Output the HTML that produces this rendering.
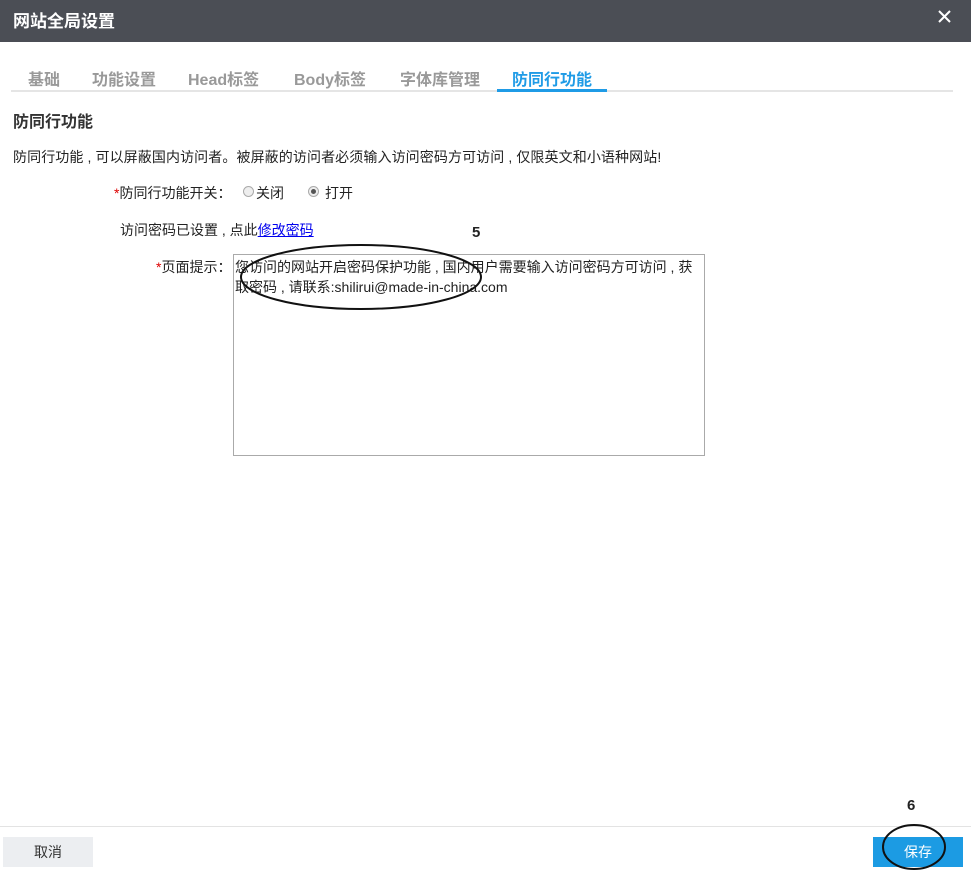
<!DOCTYPE html>
<html><head><meta charset="utf-8"><style>
*{margin:0;padding:0;box-sizing:border-box}
body{width:971px;height:870px;background:#fff;font-family:"Liberation Sans","Noto Sans CJK SC",sans-serif;color:#222;position:relative;overflow:hidden;font-size:14px}
.hd{position:absolute;left:0;top:0;width:971px;height:42px;background:#4b4e55;color:#fff}
.hd .t{position:absolute;left:13px;top:7px;font-size:17px;font-weight:bold}
.tab{position:absolute;top:66px;font-size:16px;font-weight:bold;color:#999}
.line{position:absolute;left:11px;top:90px;width:942px;height:2px;background:#e5e5e5}
.act{position:absolute;left:497px;top:89px;width:110px;height:3px;background:#1f9be6}
.a{position:absolute;white-space:nowrap}
.r{position:absolute;width:11px;height:11px;border:1px solid #aaa;border-radius:50%;background:#eee}
.r.on:after{content:"";position:absolute;left:2px;top:2px;width:5px;height:5px;border-radius:50%;background:#555}
.ta{position:absolute;left:233px;top:254px;width:472px;height:202px;border:1px solid #aaa;padding:2px 1px;font-size:14px;line-height:20px}
.btn{position:absolute;top:837px;width:90px;height:30px;text-align:center;line-height:30px;font-size:14px}
</style></head><body>
<div class="hd"><span class="t">网站全局设置</span>
<svg style="position:absolute;left:938px;top:10px" width="13" height="13"><path d="M1 1L12 12M12 1L1 12" stroke="#fff" stroke-width="2"/></svg></div>
<span class="tab" style="left:28px">基础</span>
<span class="tab" style="left:92px">功能设置</span>
<span class="tab" style="left:188px">Head标签</span>
<span class="tab" style="left:294px">Body标签</span>
<span class="tab" style="left:400px">字体库管理</span>
<span class="tab" style="left:512px;color:#1f9be6">防同行功能</span>
<div class="line"></div><div class="act"></div>
<div class="a" style="left:13px;top:108px;font-size:16px;font-weight:bold;color:#333">防同行功能</div>
<div class="a" style="left:13px;top:147px;letter-spacing:0.1px">防同行功能 , 可以屏蔽国内访问者。被屏蔽的访问者必须输入访问密码方可访问 , 仅限英文和小语种网站!</div>
<div class="a" style="left:114px;top:183px"><span style="color:#d00">*</span>防同行功能开关：</div>
<span class="r" style="left:243px;top:186px"></span><div class="a" style="left:256px;top:183px">关闭</div>
<span class="r on" style="left:308px;top:186px"></span><div class="a" style="left:325px;top:183px">打开</div>
<div class="a" style="left:120px;top:220px">访问密码已设置 , 点此<a style="color:#00e;text-decoration:underline">修改密码</a></div>
<div class="a" style="left:156px;top:257px"><span style="color:#d00">*</span>页面提示：</div>
<div class="ta">您访问的网站开启密码保护功能 , 国内用户需要输入访问密码方可访问 , 获取密码 , 请联系:shilirui@made-in-china.com</div>
<div class="a" style="left:472px;top:224px;font-weight:bold;font-size:15px">5</div>
<div style="position:absolute;left:0;top:826px;width:971px;height:1px;background:#e3e3e3"></div>
<div class="btn" style="left:3px;background:#eceef1;color:#333">取消</div>
<div class="btn" style="left:873px;background:#1c9be3;color:#fff">保存</div>
<div class="a" style="left:907px;top:797px;font-weight:bold;font-size:15px">6</div>
<svg class="a" style="left:0;top:0" width="971" height="870"><ellipse cx="361" cy="277" rx="120" ry="32" fill="none" stroke="#111" stroke-width="2"/><ellipse cx="914" cy="847" rx="31" ry="22" fill="none" stroke="#111" stroke-width="2"/></svg>
</body></html>
